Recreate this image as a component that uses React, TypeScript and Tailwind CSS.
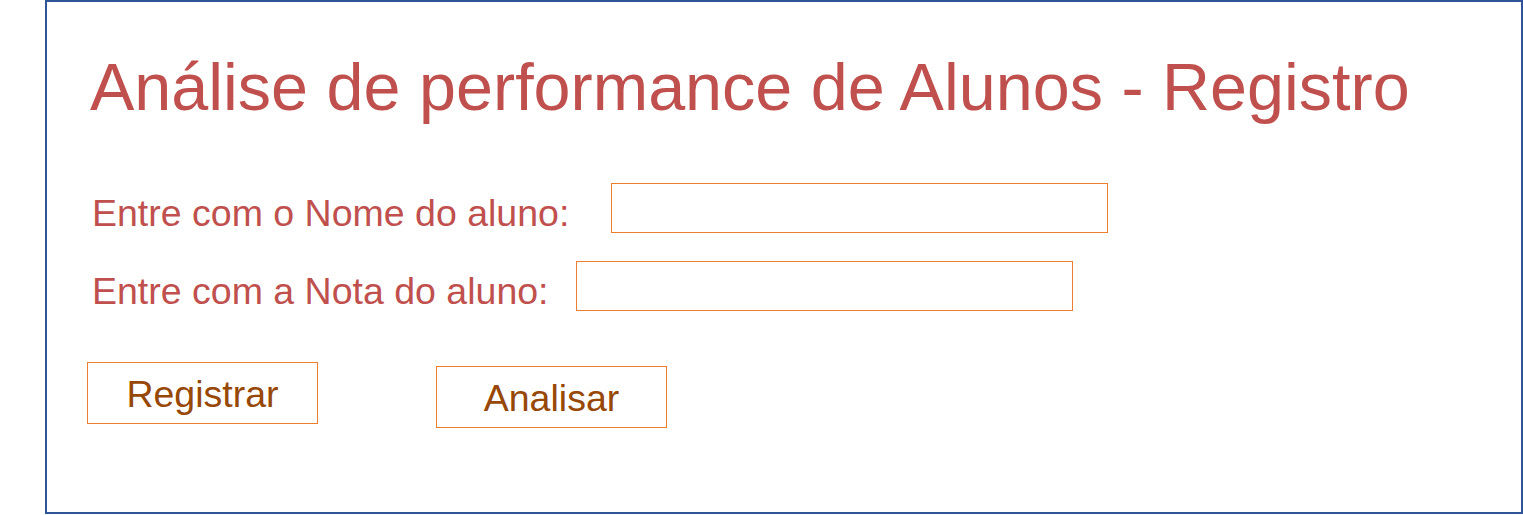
export default function App() {
    return (
        <div className="h-[515px] w-[1523px] bg-white font-['Liberation_Sans',Arial,sans-serif]">
            <div className="ml-[45px] h-[514px] w-[1478px] border-2 border-[#2f5597] pl-[42px] pt-[52px]">
                <h1 className="ml-[1px] text-[66.5px] leading-[66px] text-[#c0504d]">
                    Análise de performance de Alunos - Registro
                </h1>

                <div className="mt-[63px] flex items-start">
                    <label className="ml-[3px] mt-[12px] text-[37.5px] leading-none text-[#c0504d]">
                        Entre com o Nome do aluno:
                    </label>
                    <input
                        type="text"
                        className="ml-[42px] h-[50px] w-[497px] border border-[#ed7d31] bg-white outline-none"
                    />
                </div>

                <div className="mt-[28px] flex items-start">
                    <label className="ml-[3px] mt-[12px] text-[37.5px] leading-none text-[#c0504d]">
                        Entre com a Nota do aluno:
                    </label>
                    <input
                        type="text"
                        className="ml-[27px] h-[50px] w-[497px] border border-[#ed7d31] bg-white outline-none"
                    />
                </div>

                <div className="mt-[51px] flex items-start">
                    <button className="-ml-[2px] flex h-[62px] w-[231px] items-center justify-center border border-[#ed7d31] bg-white pt-[4px] text-[37.5px] leading-none text-[#974706]">
                        Registrar
                    </button>
                    <button className="ml-[118px] mt-[4px] flex h-[62px] w-[231px] items-center justify-center border border-[#ed7d31] bg-white pt-[4px] text-[37.5px] leading-none text-[#974706]">
                        Analisar
                    </button>
                </div>
            </div>
        </div>
    );
}
